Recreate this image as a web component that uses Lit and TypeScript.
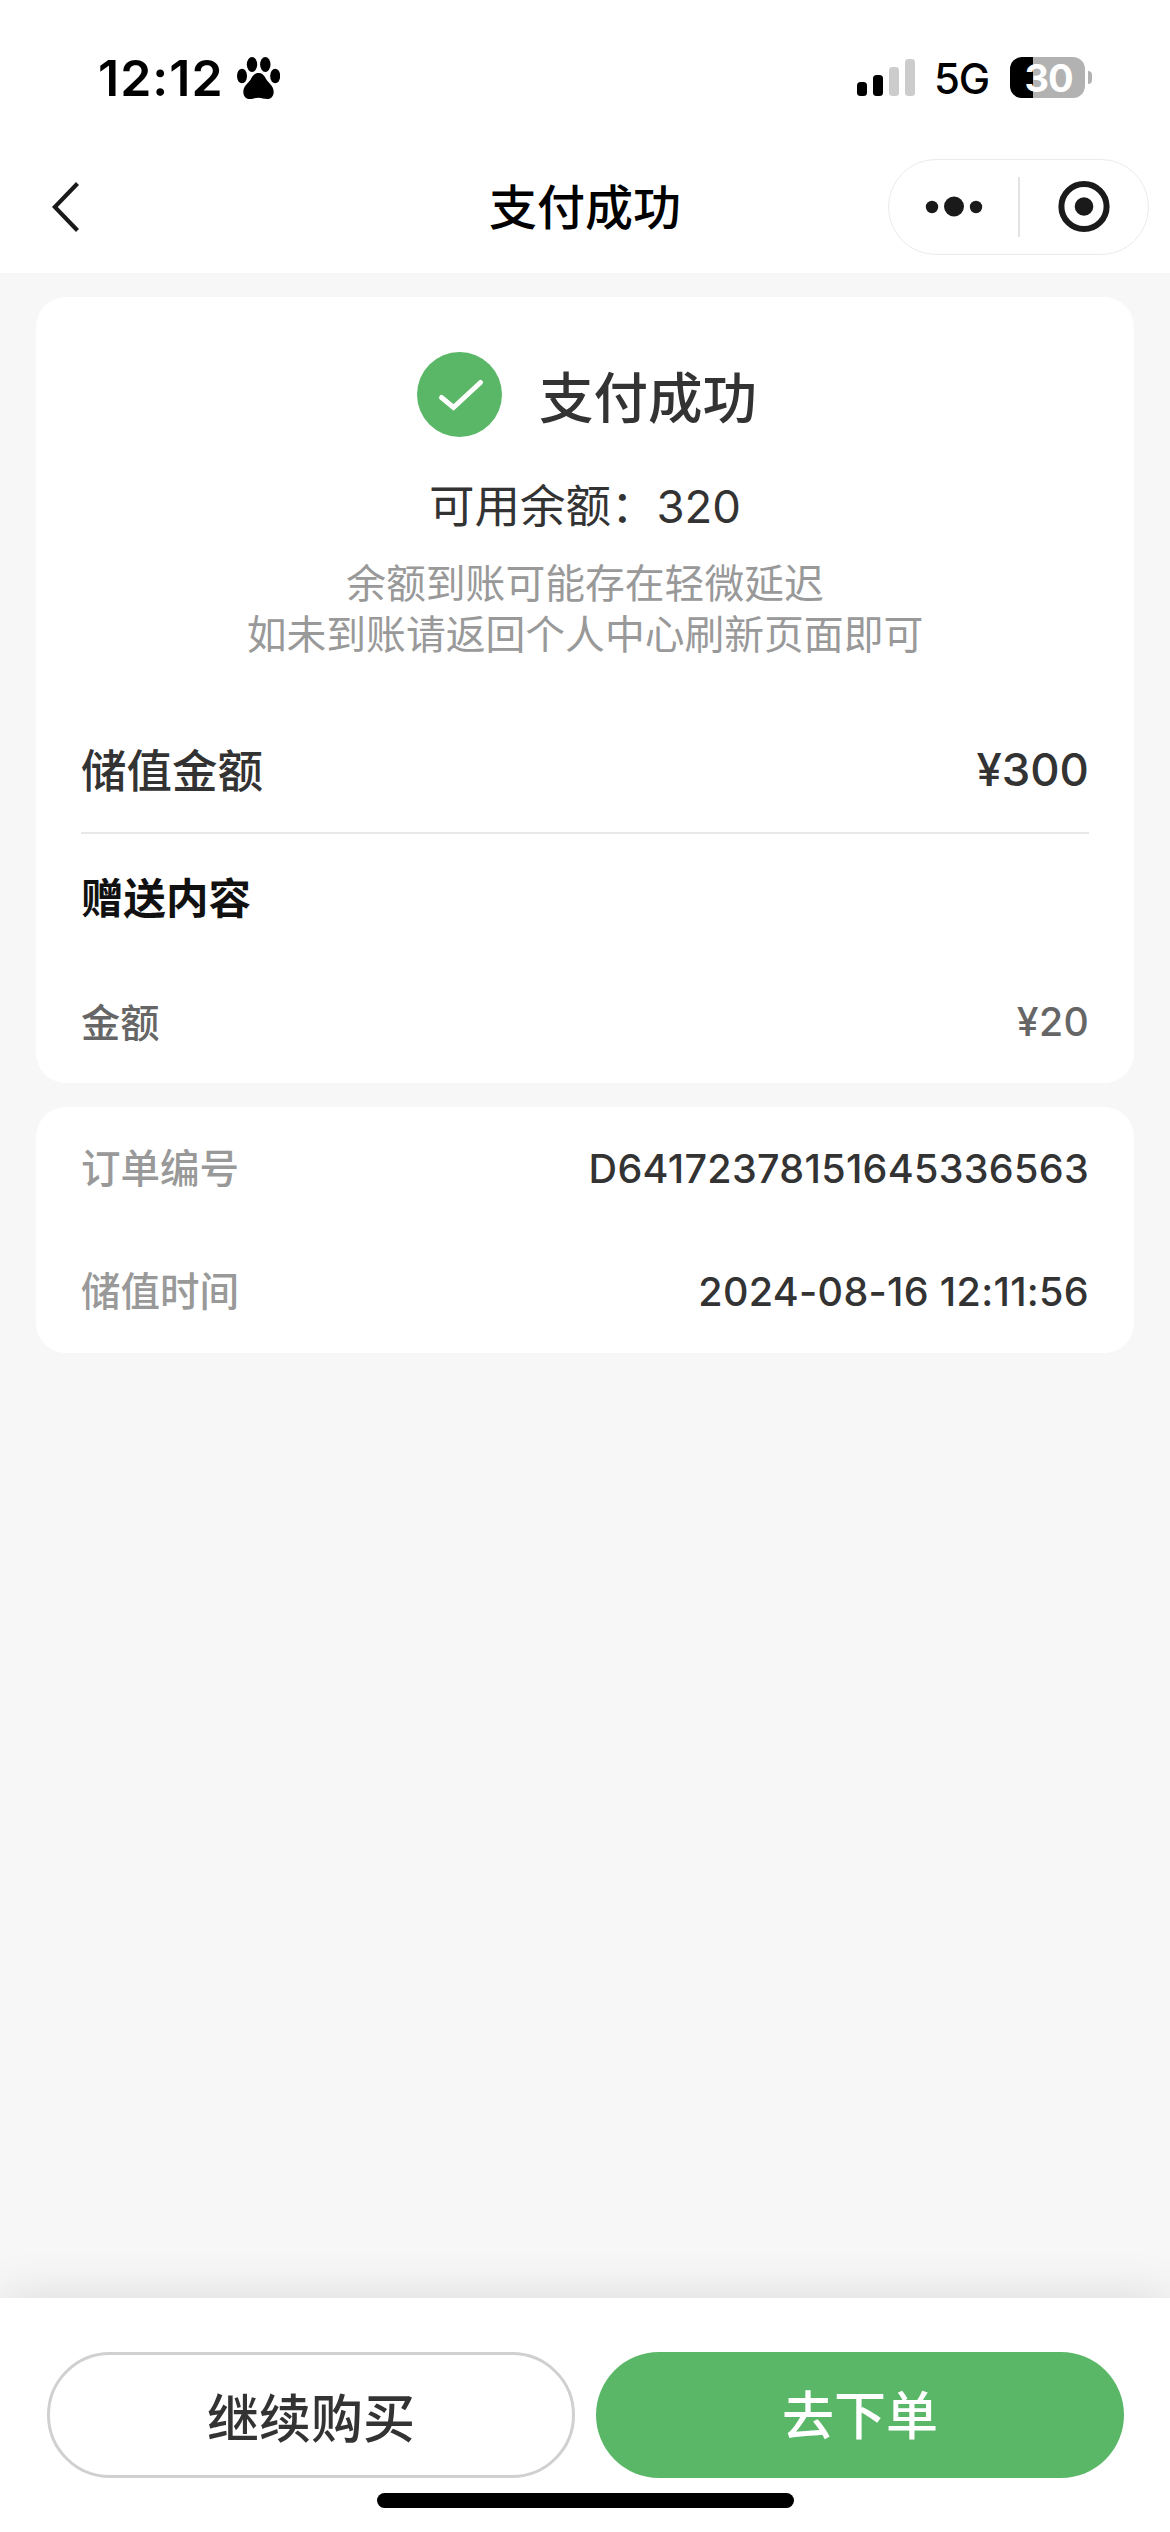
import { LitElement, html, css, svg } from "lit";
import { customElement, property } from "lit/decorators.js";

const bars = [
  { x: 0, y: 23, h: 14, on: true },
  { x: 16, y: 16, h: 21, on: true },
  { x: 32, y: 8, h: 29, on: false },
  { x: 48, y: 0, h: 37, on: false },
];

@customElement("status-bar")
class StatusBar extends LitElement {
  static styles = css`
    :host { display: flex; height: 114px; padding: 42px 78px 0 98px; box-sizing: border-box; align-items: flex-start; color: #000; }
    .time { font-size: 50px; line-height: 72px; font-weight: 600; width: 139px; letter-spacing: 1px; white-space: nowrap; }
    .paw { width: 43px; height: 42px; margin-top: 15px; }
    .right { margin-left: auto; display: flex; align-items: flex-start; }
    .signal { width: 58px; height: 37px; margin-top: 17px; }
    .net { font-size: 42px; line-height: 60px; font-weight: 500; width: 54px; margin: 7px 0 0 19px; letter-spacing: -1.2px; white-space: nowrap; }
    .battery { display: flex; align-items: center; gap: 3px; margin: 15px 0 0 22px; }
    .cell { box-sizing: border-box; width: 75px; height: 41px; padding-left: 2px; border-radius: 12px; background: linear-gradient(90deg, #000 23px, #b2b2b2 23px); color: #fff; font-size: 38px; line-height: 42px; font-weight: 700; text-align: center; letter-spacing: -1px; }
    .nub { width: 4px; height: 13px; border-radius: 0 5px 5px 0; background: #b2b2b2; }
  `;
  render() {
    return html`
      <span class="time">12:12</span>
      <svg class="paw" viewBox="0 0 43 42">
        <ellipse cx="15" cy="7.5" rx="5.2" ry="7.5" /><ellipse cx="28.3" cy="7.5" rx="5.2" ry="7.5" />
        <ellipse cx="5" cy="19" rx="5" ry="7.3" /><ellipse cx="38.2" cy="19" rx="5" ry="7.3" />
        <path d="M21.5 16c3.4 0 5.7 2 7.3 5.6 1.7 4 7.9 6.9 7.9 13.1 0 4.5-2.6 7.3-6.3 7.3-3.4 0-5.6-1.3-8.9-1.3S16 42 12.6 42c-3.7 0-6.3-2.8-6.3-7.3 0-6.2 6.2-9.1 7.9-13.1C15.8 18 18.1 16 21.5 16z" />
      </svg>
      <div class="right">
        <svg class="signal" viewBox="0 0 58 37">
          ${bars.map((b) => svg`<rect x=${b.x} y=${b.y} width="10" height=${b.h} rx="3.5" fill=${b.on ? "#000" : "#ccc"} />`)}
        </svg>
        <span class="net">5G</span>
        <div class="battery"><div class="cell">30</div><div class="nub"></div></div>
      </div>
    `;
  }
}

@customElement("nav-bar")
class NavBar extends LitElement {
  static styles = css`
    :host { display: grid; grid-template-columns: 1fr auto 1fr; align-items: center; height: 159px; padding: 27px 21px 0 52px; box-sizing: border-box; }
    .back { width: 27px; height: 50px; display: block; }
    .title { font-size: 48px; line-height: 70px; font-weight: 500; color: #000; margin: 0 0 0 -31px; padding-top: 1px; }
    .capsule { margin-left: auto; display: flex; align-items: center; box-sizing: border-box; width: 261px; height: 96px; border: 1px solid #ebebeb; border-radius: 48px; }
    .icons { width: 259px; height: 94px; display: block; }
  `;
  render() {
    return html`
      <svg class="back" viewBox="0 0 27 50"><path d="M25.5 1.5 2.8 25 25.5 48.5" fill="none" stroke="#1a1a1a" stroke-width="4.2" /></svg>
      <div class="title">支付成功</div>
      <div class="capsule">
        <svg class="icons" viewBox="889 160 259 94">
          <g fill="#1a1a1a"><circle cx="932" cy="207" r="6.2" /><circle cx="954" cy="206.5" r="10" /><circle cx="976" cy="207" r="6.2" /><circle cx="1084" cy="206.5" r="9.3" /></g>
          <circle cx="1084" cy="206.5" r="22.6" fill="none" stroke="#1a1a1a" stroke-width="6" />
          <rect x="1018" y="177" width="2" height="60" fill="#e3e3e3" />
        </svg>
      </div>
    `;
  }
}

@customElement("info-row")
class InfoRow extends LitElement {
  @property() label = "";
  @property() value = "";
  static styles = css`
    :host { display: flex; justify-content: space-between; align-items: center; white-space: nowrap; }
    .label { color: var(--label); padding-bottom: var(--lift, 3px); }
    .value { color: var(--value); letter-spacing: var(--track, 0); }
  `;
  render() {
    return html`<span class="label">${this.label}</span><span class="value">${this.value}</span>`;
  }
}

@customElement("app-root")
class AppRoot extends LitElement {
  static styles = css`
    :host { display: flex; flex-direction: column; height: 2532px; background: #f7f7f7; overflow: hidden; font-family: Inter, "Noto Sans CJK SC", sans-serif; color: #333; }
    .head { background: #fff; height: 273px; }
    .main { flex: 1; padding: 24px 36px 0; display: flex; flex-direction: column; gap: 24px; }
    .card { background: #fff; border-radius: 30px; padding: 0 45px; }
    .result { height: 786px; box-sizing: border-box; padding-top: 55px; }
    .success { display: flex; justify-content: center; align-items: center; height: 85px; gap: 37px; padding-left: 4px; }
    .tick { width: 85px; height: 85px; display: block; }
    .done { font-size: 54.5px; line-height: 78px; font-weight: 500; padding-top: 7px; }
    .balance { margin-top: 37px; height: 66px; line-height: 66px; font-size: 45.5px; text-align: center; }
    .hint { margin-top: 18px; font-size: 39.8px; line-height: 51px; color: #999; text-align: center; }
    .amount { height: 125px; margin-top: 47px; font-size: 45.5px; font-weight: 500; border-bottom: 2px solid #e8e8e8; --label: #333; --value: #333; }
    .gift { height: 123px; line-height: 123px; margin-top: 3px; font-size: 42.5px; font-weight: 600; color: #111; }
    .bonus { height: 122px; font-size: 39.2px; font-weight: 500; --label: #666; --value: #666; --lift: 2px; --track: 0.3px; }
    .order { height: 246px; }
    .line { height: 123px; font-size: 39.5px; font-weight: 500; --label: #999; --value: #333; --lift: 6px; --track: 0.3px; }
    .foot { height: 234px; box-sizing: border-box; background: #fff; box-shadow: 0 0 47px rgba(0, 0, 0, 0.12); padding: 54px 46px 0 47px; display: flex; flex-direction: column; align-items: center; }
    .buttons { display: grid; grid-template-columns: 1fr 1fr; gap: 21px; align-self: stretch; }
    .btn { height: 126px; box-sizing: border-box; border-radius: 63px; display: flex; justify-content: center; align-items: center; font-size: 52px; font-weight: 500; }
    .ghost { border: 3px solid #d0d0d0; background: #fff; }
    .solid { background: #5ab767; color: #fff; padding-bottom: 5px; }
    .home { width: 417px; height: 15px; border-radius: 8px; background: #000; margin-top: 15px; }
  `;
  render() {
    return html`
      <div class="head"><status-bar></status-bar><nav-bar></nav-bar></div>
      <div class="main">
        <section class="card result">
          <div class="success">
            <svg class="tick" viewBox="0 0 85 85"><circle cx="42.5" cy="42.5" r="42.5" fill="#5ab767" /><path d="M24.5 45.5 36.5 55.5 63.5 30.5" fill="none" stroke="#fff" stroke-width="5" stroke-linecap="round" stroke-linejoin="miter" /></svg>
            <div class="done">支付成功</div>
          </div>
          <div class="balance">可用余额：320</div>
          <div class="hint">余额到账可能存在轻微延迟<br />如未到账请返回个人中心刷新页面即可</div>
          <info-row class="amount" label="储值金额" value="¥300"></info-row>
          <div class="gift">赠送内容</div>
          <info-row class="bonus" label="金额" value="¥20"></info-row>
        </section>
        <section class="card order">
          <info-row class="line" label="订单编号" value="D64172378151645336563"></info-row>
          <info-row class="line" label="储值时间" value="2024-08-16 12:11:56"></info-row>
        </section>
      </div>
      <div class="foot">
        <div class="buttons">
          <div class="btn ghost">继续购买</div>
          <div class="btn solid">去下单</div>
        </div>
        <div class="home"></div>
      </div>
    `;
  }
}
